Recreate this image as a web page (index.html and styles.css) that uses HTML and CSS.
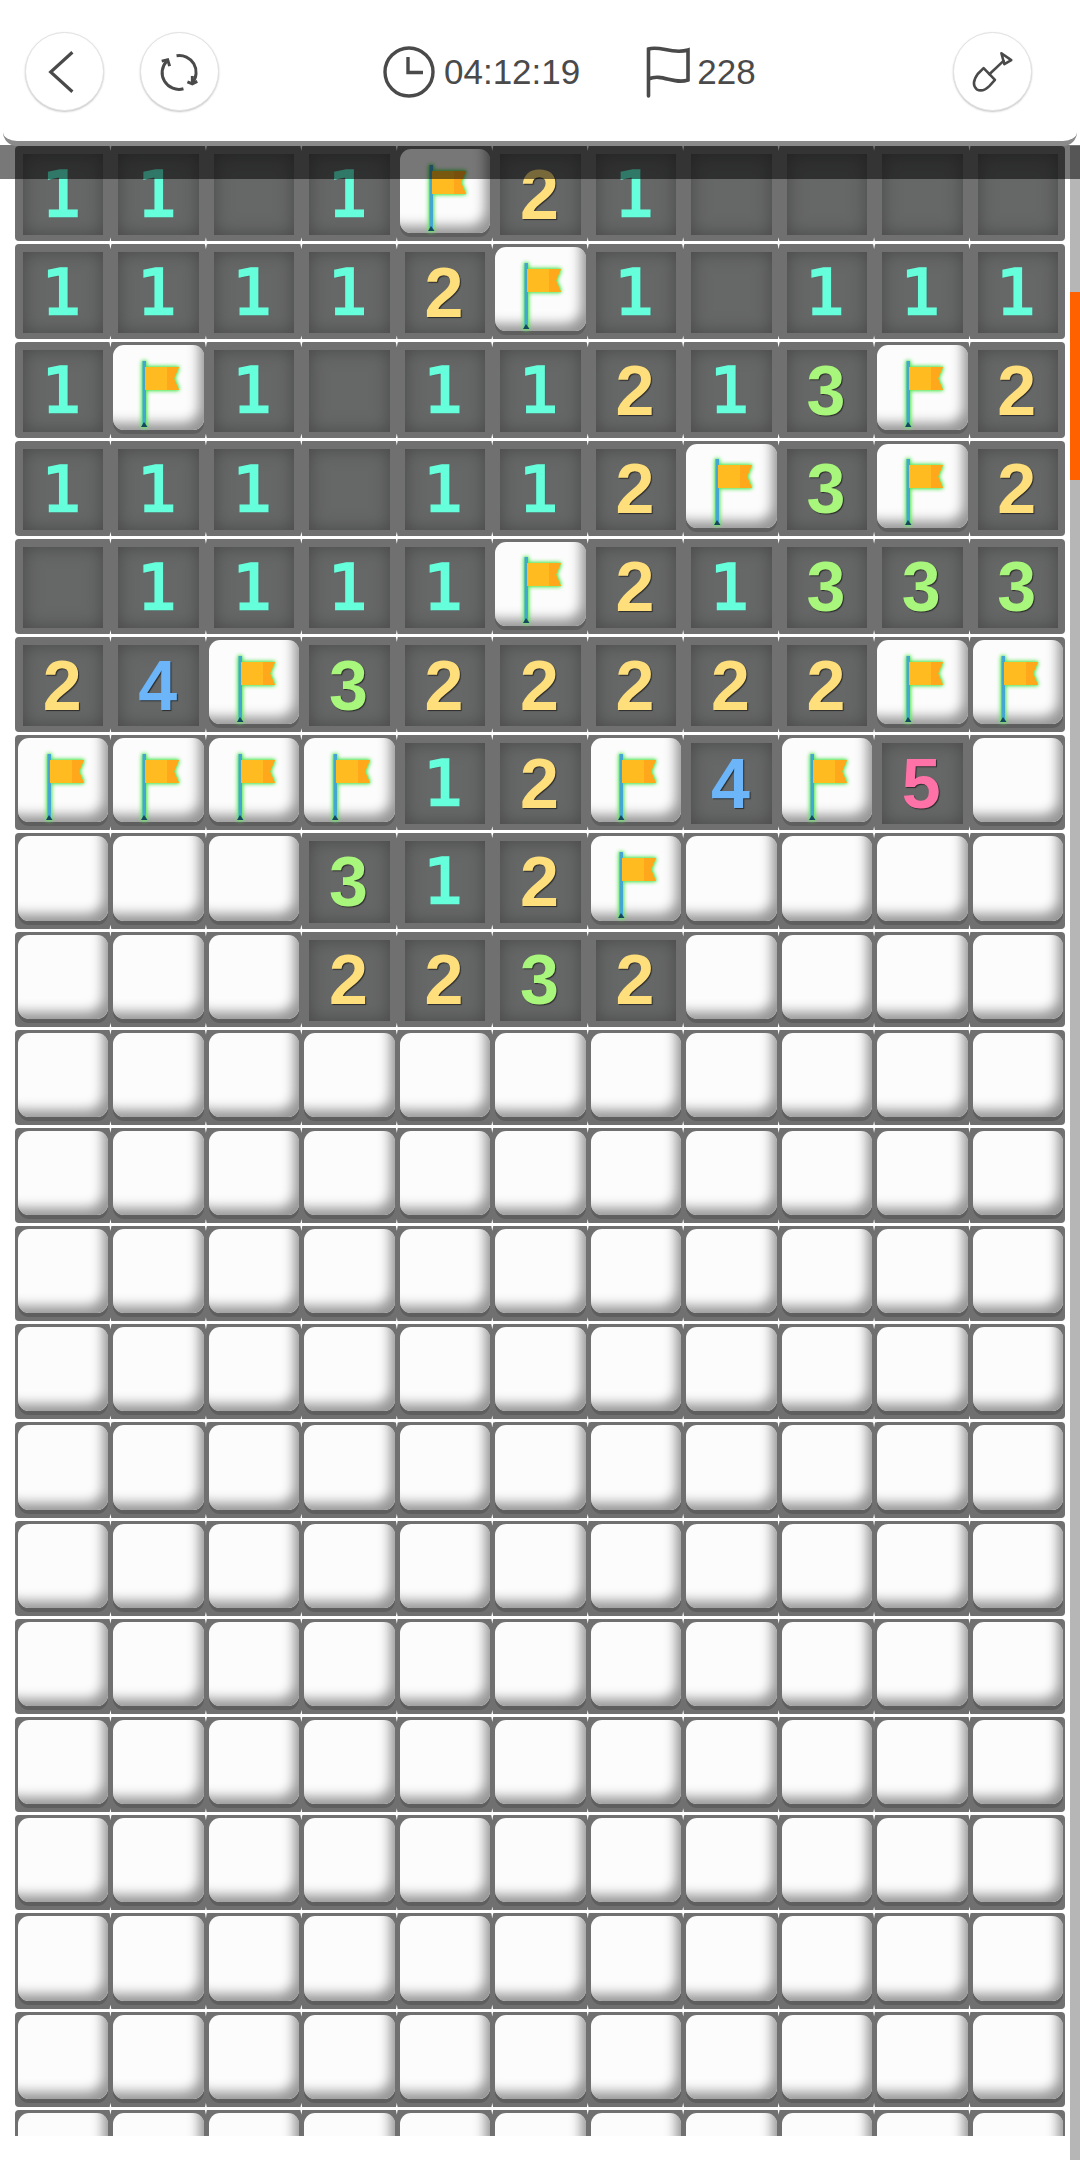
FILE: index.html
```html
<!DOCTYPE html>
<html lang="en">
<head>
  <meta charset="UTF-8">
  <title>Minesweeper</title>
  <link rel="stylesheet" href="styles.css">
</head>
<body>
  <svg class="defs" width="0" height="0">
    <symbol id="flag" viewBox="0 0 40 68">
      <rect x="1.5" y="0" width="3.5" height="64" fill="#45a6cf"/>
      <path d="M0 66 L3 61 L6.5 66 Z" fill="#17465f"/>
      <path d="M4 6 H38 L33 17.5 L38 29 H4 Z" fill="#ffbb20"/>
      <path d="M26 6 H38 L33 17.5 L38 29 H26 Z" fill="#ffa81c"/>
    </symbol>
  </svg>

  <header class="topbar">
    <button class="round back">
      <svg width="78" height="78" viewBox="0 0 78 78"><path d="M47 19 L25 39 L47 59" fill="none" stroke="#4a4a4a" stroke-width="3.2"/></svg>
    </button>
    <button class="round reload">
      <svg width="78" height="78" viewBox="0 0 78 78" fill="none" stroke="#4a4a4a" stroke-width="3">
        <path d="M36 22.5 A17 17 0 0 1 52 50"/>
        <path d="M43 56 A17 17 0 0 1 26 28"/>
        <path d="M21 28 L27 26.5 L29 33"/>
        <path d="M57 48.5 L52 51 L47 49"/>
        <path d="M52 43 V51"/>
      </svg>
    </button>
    <div class="stats">
      <svg class="stat-icon" width="52" height="52" viewBox="0 0 52 52" fill="none" stroke="#4a4a4a" stroke-width="3.4">
        <circle cx="26" cy="26" r="24"/>
        <path d="M25 11 V26.5 H40"/>
      </svg>
      <span class="stat-time">04:12:19</span>
      <svg class="stat-icon stat-flag" width="44" height="52" viewBox="0 0 44 52" fill="none" stroke="#4a4a4a" stroke-width="3.6">
        <path d="M2.5 50 V3 C14 -1 26 9 42 4 V34 C28 39 16 27 2.5 33" stroke-linecap="round"/>
      </svg>
      <span class="stat-count">228</span>
    </div>
    <button class="round shovel">
      <svg width="78" height="78" viewBox="0 0 78 78" fill="none" stroke="#4a4a4a" stroke-width="2.6" stroke-linejoin="round">
        <path d="M30 35 L41.5 47 L36 53 Q29 60 23 56.5 Q17 51 24 41 Z"/>
        <path d="M35 42 L51 27"/>
        <path d="M48 20 L58 27 L51 31 Z"/>
      </svg>
    </button>
  </header>

  <main class="board">
    <div class="row"><div class="open n1">1</div><div class="open n1">1</div><div class="open"></div><div class="open n1">1</div><div class="tile"><svg class="flag"><use href="#flag"/></svg></div><div class="open n2">2</div><div class="open n1">1</div><div class="open"></div><div class="open"></div><div class="open"></div><div class="open"></div></div>
    <div class="row"><div class="open n1">1</div><div class="open n1">1</div><div class="open n1">1</div><div class="open n1">1</div><div class="open n2">2</div><div class="tile"><svg class="flag"><use href="#flag"/></svg></div><div class="open n1">1</div><div class="open"></div><div class="open n1">1</div><div class="open n1">1</div><div class="open n1">1</div></div>
    <div class="row"><div class="open n1">1</div><div class="tile"><svg class="flag"><use href="#flag"/></svg></div><div class="open n1">1</div><div class="open"></div><div class="open n1">1</div><div class="open n1">1</div><div class="open n2">2</div><div class="open n1">1</div><div class="open n3">3</div><div class="tile"><svg class="flag"><use href="#flag"/></svg></div><div class="open n2">2</div></div>
    <div class="row"><div class="open n1">1</div><div class="open n1">1</div><div class="open n1">1</div><div class="open"></div><div class="open n1">1</div><div class="open n1">1</div><div class="open n2">2</div><div class="tile"><svg class="flag"><use href="#flag"/></svg></div><div class="open n3">3</div><div class="tile"><svg class="flag"><use href="#flag"/></svg></div><div class="open n2">2</div></div>
    <div class="row"><div class="open"></div><div class="open n1">1</div><div class="open n1">1</div><div class="open n1">1</div><div class="open n1">1</div><div class="tile"><svg class="flag"><use href="#flag"/></svg></div><div class="open n2">2</div><div class="open n1">1</div><div class="open n3">3</div><div class="open n3">3</div><div class="open n3">3</div></div>
    <div class="row"><div class="open n2">2</div><div class="open n4">4</div><div class="tile"><svg class="flag"><use href="#flag"/></svg></div><div class="open n3">3</div><div class="open n2">2</div><div class="open n2">2</div><div class="open n2">2</div><div class="open n2">2</div><div class="open n2">2</div><div class="tile"><svg class="flag"><use href="#flag"/></svg></div><div class="tile"><svg class="flag"><use href="#flag"/></svg></div></div>
    <div class="row"><div class="tile"><svg class="flag"><use href="#flag"/></svg></div><div class="tile"><svg class="flag"><use href="#flag"/></svg></div><div class="tile"><svg class="flag"><use href="#flag"/></svg></div><div class="tile"><svg class="flag"><use href="#flag"/></svg></div><div class="open n1">1</div><div class="open n2">2</div><div class="tile"><svg class="flag"><use href="#flag"/></svg></div><div class="open n4">4</div><div class="tile"><svg class="flag"><use href="#flag"/></svg></div><div class="open n5">5</div><div class="tile"></div></div>
    <div class="row"><div class="tile"></div><div class="tile"></div><div class="tile"></div><div class="open n3">3</div><div class="open n1">1</div><div class="open n2">2</div><div class="tile"><svg class="flag"><use href="#flag"/></svg></div><div class="tile"></div><div class="tile"></div><div class="tile"></div><div class="tile"></div></div>
    <div class="row"><div class="tile"></div><div class="tile"></div><div class="tile"></div><div class="open n2">2</div><div class="open n2">2</div><div class="open n3">3</div><div class="open n2">2</div><div class="tile"></div><div class="tile"></div><div class="tile"></div><div class="tile"></div></div>
    <div class="row"><div class="tile"></div><div class="tile"></div><div class="tile"></div><div class="tile"></div><div class="tile"></div><div class="tile"></div><div class="tile"></div><div class="tile"></div><div class="tile"></div><div class="tile"></div><div class="tile"></div></div>
    <div class="row"><div class="tile"></div><div class="tile"></div><div class="tile"></div><div class="tile"></div><div class="tile"></div><div class="tile"></div><div class="tile"></div><div class="tile"></div><div class="tile"></div><div class="tile"></div><div class="tile"></div></div>
    <div class="row"><div class="tile"></div><div class="tile"></div><div class="tile"></div><div class="tile"></div><div class="tile"></div><div class="tile"></div><div class="tile"></div><div class="tile"></div><div class="tile"></div><div class="tile"></div><div class="tile"></div></div>
    <div class="row"><div class="tile"></div><div class="tile"></div><div class="tile"></div><div class="tile"></div><div class="tile"></div><div class="tile"></div><div class="tile"></div><div class="tile"></div><div class="tile"></div><div class="tile"></div><div class="tile"></div></div>
    <div class="row"><div class="tile"></div><div class="tile"></div><div class="tile"></div><div class="tile"></div><div class="tile"></div><div class="tile"></div><div class="tile"></div><div class="tile"></div><div class="tile"></div><div class="tile"></div><div class="tile"></div></div>
    <div class="row"><div class="tile"></div><div class="tile"></div><div class="tile"></div><div class="tile"></div><div class="tile"></div><div class="tile"></div><div class="tile"></div><div class="tile"></div><div class="tile"></div><div class="tile"></div><div class="tile"></div></div>
    <div class="row"><div class="tile"></div><div class="tile"></div><div class="tile"></div><div class="tile"></div><div class="tile"></div><div class="tile"></div><div class="tile"></div><div class="tile"></div><div class="tile"></div><div class="tile"></div><div class="tile"></div></div>
    <div class="row"><div class="tile"></div><div class="tile"></div><div class="tile"></div><div class="tile"></div><div class="tile"></div><div class="tile"></div><div class="tile"></div><div class="tile"></div><div class="tile"></div><div class="tile"></div><div class="tile"></div></div>
    <div class="row"><div class="tile"></div><div class="tile"></div><div class="tile"></div><div class="tile"></div><div class="tile"></div><div class="tile"></div><div class="tile"></div><div class="tile"></div><div class="tile"></div><div class="tile"></div><div class="tile"></div></div>
    <div class="row"><div class="tile"></div><div class="tile"></div><div class="tile"></div><div class="tile"></div><div class="tile"></div><div class="tile"></div><div class="tile"></div><div class="tile"></div><div class="tile"></div><div class="tile"></div><div class="tile"></div></div>
    <div class="row"><div class="tile"></div><div class="tile"></div><div class="tile"></div><div class="tile"></div><div class="tile"></div><div class="tile"></div><div class="tile"></div><div class="tile"></div><div class="tile"></div><div class="tile"></div><div class="tile"></div></div>
    <div class="row"><div class="tile"></div><div class="tile"></div><div class="tile"></div><div class="tile"></div><div class="tile"></div><div class="tile"></div><div class="tile"></div><div class="tile"></div><div class="tile"></div><div class="tile"></div><div class="tile"></div></div>
  </main>

  <div class="dim"></div>
  <div class="scrollbar"><div class="scroll-thumb"></div></div>
</body>
</html>
```

FILE: styles.css
```css
html, body {
  margin: 0;
  padding: 0;
  background-color: #fff;
}
body {
  position: relative;
  height: 2160px;
  overflow: hidden;
  font-family: "Liberation Sans", Arial, sans-serif;
}
.defs {
  position: absolute;
}

/* top bar */
.topbar {
  position: relative;
  z-index: 3;
  box-sizing: border-box;
  height: 146px;
  margin: 0 3px;
  padding: 32px 45px 0 22px;
  display: flex;
  align-items: flex-start;
  background-color: #fff;
  border-bottom: 5px solid #8a8a8a;
  border-radius: 0 0 14px 14px;
}
.round {
  box-sizing: border-box;
  flex: none;
  width: 79px;
  height: 79px;
  padding: 0;
  display: flex;
  align-items: center;
  justify-content: center;
  background-color: #fff;
  border: 1px solid #e2e2e2;
  border-radius: 50%;
  box-shadow: 0 1px 2px #c4c4c4;
}
.reload {
  margin-left: 36px;
}
.shovel {
  margin-left: auto;
}
.stats {
  margin-left: 164px;
  margin-top: 14px;
  display: flex;
  align-items: center;
  color: #4a4a4a;
  font-size: 35px;
  line-height: 52px;
}
.stat-time {
  margin-left: 9px;
}
.stat-flag {
  margin-left: 66px;
}
.stat-count {
  margin-left: 7px;
}

/* board */
.board {
  box-sizing: border-box;
  height: 1990px;
  padding: 0 15px;
  display: flex;
  flex-direction: column;
  gap: 3px;
  overflow: hidden;
}
.row {
  flex: none;
  height: 95.2px;
  display: grid;
  grid-template-columns: repeat(11, 1fr);
  background-color: #707070;
  border-radius: 4px;
}
.open, .tile {
  position: relative;
  box-sizing: border-box;
}
.open {
  display: flex;
  align-items: center;
  justify-content: center;
  margin: 8px 7px 6px 8px;
  padding-right: 2px;
  background-color: #666767;
  box-shadow: inset 0 0 18px #484848;
  font-weight: 700;
  font-size: 70px;
  line-height: 1;
  text-shadow: 1px 1px 1px #2c2c2c;
}
.tile {
  display: flex;
  align-items: center;
  justify-content: center;
  margin: 3px 2px 8px 3px;
  background-color: #fcfcfc;
  border-radius: 11px;
  box-shadow: inset -10px -12px 12px -5px #969696, 0 4px 0 #5e5e5e;
}
.flag {
  width: 40px;
  height: 68px;
  margin: 15px 0 0 5px;
  filter: drop-shadow(0 0 2px #5fe85f) drop-shadow(0 0 1px #5fe85f);
}
.n1 {
  color: #66ffdc;
  font-family: "DejaVu Sans", sans-serif;
  font-weight: 400;
  font-size: 63px;
  -webkit-text-stroke: 2.5px #66ffdc;
}
.n2 { color: #ffdf7c; }
.n3 { color: #a9f67c; }
.n4 { color: #6bb5f8; }
.n5 { color: #ff72a8; }

/* little white sparks where the rows and columns meet */
.row > div:not(:first-child)::before {
  content: "";
  position: absolute;
  width: 12px;
  height: 12px;
  background-color: #fff;
  clip-path: polygon(50% 0, 58% 42%, 100% 50%, 58% 58%, 50% 100%, 42% 58%, 0 50%, 42% 42%);
}
.open:not(:first-child)::before {
  left: -14px;
  top: -15px;
}
.tile:not(:first-child)::before {
  left: -9px;
  top: -10px;
}

/* things lying over the page */
.dim {
  position: absolute;
  z-index: 2;
  left: 0;
  right: 0;
  top: 145px;
  height: 34px;
  background-color: rgba(0, 0, 0, 0.53);
}
.scrollbar {
  position: absolute;
  z-index: 1;
  right: 0;
  top: 146px;
  bottom: 0;
  width: 10px;
  background-color: #b6b6b6;
}
.scroll-thumb {
  margin-top: 146px;
  height: 188px;
  background-color: #ff6000;
}
```
